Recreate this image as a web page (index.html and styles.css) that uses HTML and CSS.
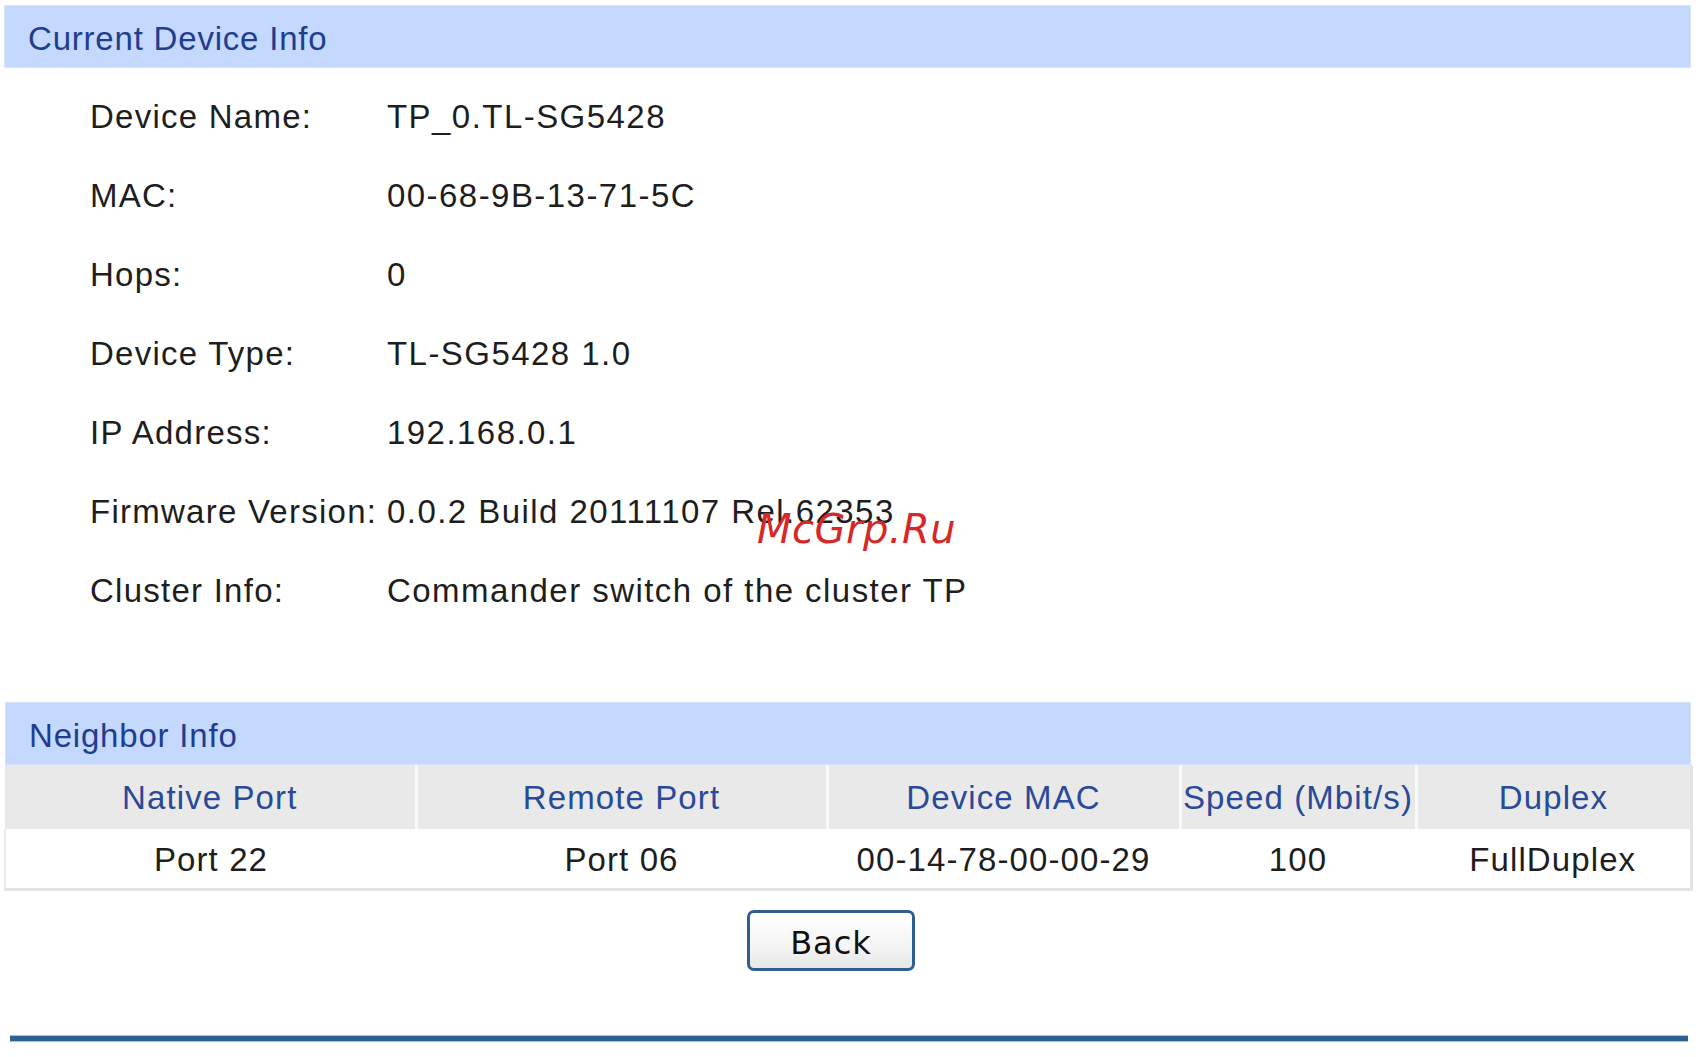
FILE: index.html
```html
<!DOCTYPE html>
<html lang="en">
<head>
    <meta charset="UTF-8">
    <title>Cluster Topology - Device Info</title>
    <link rel="stylesheet" href="styles.css">
</head>
<body>
    <div class="page">
        <div class="section-title">Current Device Info</div>

        <div class="info-list">
            <div class="info-row"><span class="info-label">Device Name:</span><span class="info-value">TP_0.TL-SG5428</span></div>
            <div class="info-row"><span class="info-label">MAC:</span><span class="info-value">00-68-9B-13-71-5C</span></div>
            <div class="info-row"><span class="info-label">Hops:</span><span class="info-value">0</span></div>
            <div class="info-row"><span class="info-label">Device Type:</span><span class="info-value">TL-SG5428 1.0</span></div>
            <div class="info-row"><span class="info-label">IP Address:</span><span class="info-value">192.168.0.1</span></div>
            <div class="info-row"><span class="info-label">Firmware Version:</span><span class="info-value">0.0.2 Build 20111107 Rel.62353</span></div>
            <div class="info-row"><span class="info-label">Cluster Info:</span><span class="info-value">Commander switch of the cluster TP</span></div>
        </div>

        <div class="section-title neighbor-title">Neighbor Info</div>

        <table class="neighbor-table">
            <thead>
                <tr>
                    <th class="col-native">Native Port</th>
                    <th class="col-remote">Remote Port</th>
                    <th class="col-mac">Device MAC</th>
                    <th class="col-speed">Speed (Mbit/s)</th>
                    <th class="col-duplex">Duplex</th>
                </tr>
            </thead>
            <tbody>
                <tr>
                    <td>Port 22</td>
                    <td>Port 06</td>
                    <td>00-14-78-00-00-29</td>
                    <td>100</td>
                    <td>FullDuplex</td>
                </tr>
            </tbody>
        </table>

        <div class="button-bar">
            <button type="button" class="back-button">Back</button>
        </div>

        <div class="bottom-line"></div>

        <div class="watermark">McGrp.Ru</div>
    </div>
</body>
</html>
```

FILE: styles.css
```css
:root {
    --title-bg: #c5d9fe;
    --title-color: #1f3e8e;
    --head-bg: #e9e9e9;
    --text-color: #1e1e1e;
    --line-color: #2a6292;
}

* {
    margin: 0;
    padding: 0;
    box-sizing: border-box;
}

body {
    background: #fff;
    font-family: 'Liberation Sans', Arial, sans-serif;
    font-size: 33px;
    letter-spacing: 1.1px;
    color: var(--text-color);
}

.page {
    position: relative;
    width: 1701px;
    height: 1057px;
    padding: 5px 10px 0 4px;
}

.section-title {
    height: 63px;
    line-height: 66px;
    padding-left: 23px;
    background: var(--title-bg);
    color: var(--title-color);
    border: 1px solid #d6e3fb;
    letter-spacing: 0.8px;
}

.info-list {
    padding: 9px 0 0 86px;
    height: 634px;
}

.info-row {
    display: flex;
    height: 79px;
    align-items: center;
}

.info-label {
    width: 297px;
    flex-shrink: 0;
    white-space: nowrap;
    letter-spacing: 1.25px;
}

.info-value {
    white-space: nowrap;
    letter-spacing: 1.45px;
}

.neighbor-title {
    margin-left: 1px;
}

.neighbor-table {
    width: 1686px;
    border-collapse: collapse;
    table-layout: fixed;
}

.neighbor-table th {
    height: 64px;
    background: var(--head-bg);
    color: #2a4a98;
    font-weight: normal;
    border-right: 3px solid #fafafa;
    padding-top: 2px;
}

.neighbor-table th:last-child {
    border-right: 3px solid #e4e4e4;
}

.neighbor-table td {
    height: 60px;
    text-align: center;
    border-bottom: 3px solid #e4e4e4;
    padding-top: 4px;
}

.neighbor-table td:first-child {
    border-left: 2px solid #ececec;
}

.neighbor-table td:last-child {
    border-right: 3px solid #e4e4e4;
}

.col-native { width: 411px; }
.col-remote { width: 411px; }
.col-mac { width: 353px; }
.col-speed { width: 236px; }
.col-duplex { width: 275px; }

.button-bar {
    display: flex;
    justify-content: center;
    padding: 19px 33px 0 0;
    height: 144px;
}

.back-button {
    width: 168px;
    height: 61px;
    border: 3px solid #2f5f90;
    border-radius: 7px;
    background: linear-gradient(#ffffff 0%, #f5f5f5 60%, #e6e6e6 100%);
    font-family: 'DejaVu Sans', 'Liberation Sans', sans-serif;
    font-size: 32px;
    letter-spacing: 1px;
    color: #111;
    padding-top: 5px;
}

.bottom-line {
    margin-left: 6px;
    width: 1678px;
    height: 7px;
    background: var(--line-color);
    border-top: 1px solid #a9c3dc;
    border-bottom: 1px solid #a9c3dc;
}

.watermark {
    position: absolute;
    left: 757px;
    top: 509px;
    font-family: 'DejaVu Sans', sans-serif;
    font-style: oblique;
    font-size: 40px;
    line-height: 40px;
    letter-spacing: 0.5px;
    color: #d62828;
}
```
